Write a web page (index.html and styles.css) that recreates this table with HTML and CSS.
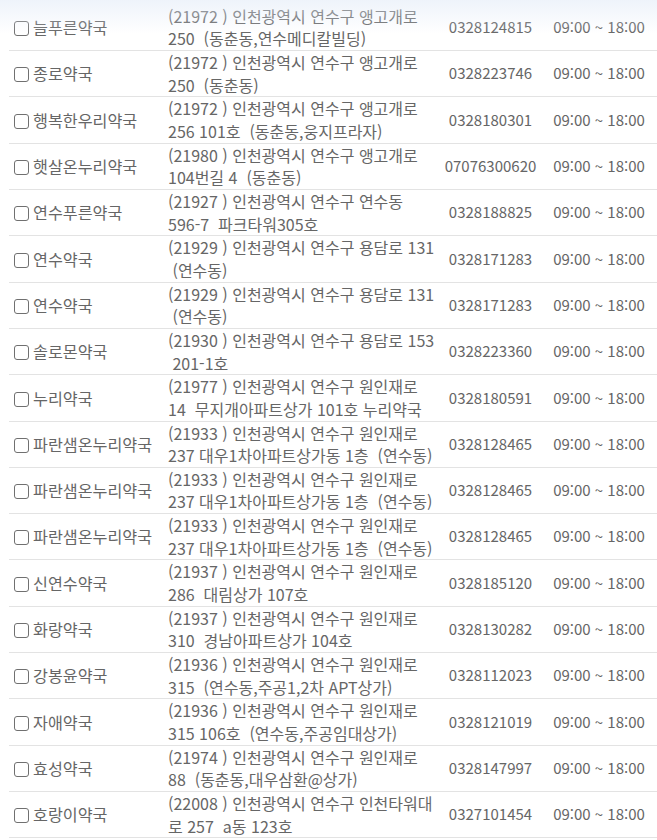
FILE: index.html
```html
<!DOCTYPE html>
<html lang="ko">
<head>
  <meta charset="UTF-8">
  <title>약국 목록</title>
  <link rel="stylesheet" href="styles.css">
</head>
<body>

  <div class="list-wrap">
    <table class="pharmacy-table">
      <colgroup>
        <col class="col-name">
        <col class="col-addr">
        <col class="col-tel">
        <col class="col-time">
      </colgroup>
      <tbody>
        <tr>
          <td class="name"><input type="checkbox" class="pick">늘푸른약국</td>
          <td class="addr">(21972 ) 인천광역시 연수구 앵고개로<br>250&nbsp; (동춘동,연수메디칼빌딩)</td>
          <td class="tel">0328124815</td>
          <td class="time">09:00 ~ 18:00</td>
        </tr>
        <tr>
          <td class="name"><input type="checkbox" class="pick">종로약국</td>
          <td class="addr">(21972 ) 인천광역시 연수구 앵고개로<br>250&nbsp; (동춘동)</td>
          <td class="tel">0328223746</td>
          <td class="time">09:00 ~ 18:00</td>
        </tr>
        <tr>
          <td class="name"><input type="checkbox" class="pick">행복한우리약국</td>
          <td class="addr">(21972 ) 인천광역시 연수구 앵고개로<br>256 101호&nbsp; (동춘동,웅지프라자)</td>
          <td class="tel">0328180301</td>
          <td class="time">09:00 ~ 18:00</td>
        </tr>
        <tr>
          <td class="name"><input type="checkbox" class="pick">햇살온누리약국</td>
          <td class="addr">(21980 ) 인천광역시 연수구 앵고개로<br>104번길 4&nbsp; (동춘동)</td>
          <td class="tel">07076300620</td>
          <td class="time">09:00 ~ 18:00</td>
        </tr>
        <tr>
          <td class="name"><input type="checkbox" class="pick">연수푸른약국</td>
          <td class="addr">(21927 ) 인천광역시 연수구 연수동<br>596-7&nbsp; 파크타워305호</td>
          <td class="tel">0328188825</td>
          <td class="time">09:00 ~ 18:00</td>
        </tr>
        <tr>
          <td class="name"><input type="checkbox" class="pick">연수약국</td>
          <td class="addr">(21929 ) 인천광역시 연수구 용담로 131<br>&nbsp;(연수동)</td>
          <td class="tel">0328171283</td>
          <td class="time">09:00 ~ 18:00</td>
        </tr>
        <tr>
          <td class="name"><input type="checkbox" class="pick">연수약국</td>
          <td class="addr">(21929 ) 인천광역시 연수구 용담로 131<br>&nbsp;(연수동)</td>
          <td class="tel">0328171283</td>
          <td class="time">09:00 ~ 18:00</td>
        </tr>
        <tr>
          <td class="name"><input type="checkbox" class="pick">솔로몬약국</td>
          <td class="addr">(21930 ) 인천광역시 연수구 용담로 153<br>&nbsp;201-1호</td>
          <td class="tel">0328223360</td>
          <td class="time">09:00 ~ 18:00</td>
        </tr>
        <tr>
          <td class="name"><input type="checkbox" class="pick">누리약국</td>
          <td class="addr">(21977 ) 인천광역시 연수구 원인재로<br>14&nbsp; 무지개아파트상가 101호 누리약국</td>
          <td class="tel">0328180591</td>
          <td class="time">09:00 ~ 18:00</td>
        </tr>
        <tr>
          <td class="name"><input type="checkbox" class="pick">파란샘온누리약국</td>
          <td class="addr">(21933 ) 인천광역시 연수구 원인재로<br>237 대우1차아파트상가동 1층&nbsp; (연수동)</td>
          <td class="tel">0328128465</td>
          <td class="time">09:00 ~ 18:00</td>
        </tr>
        <tr>
          <td class="name"><input type="checkbox" class="pick">파란샘온누리약국</td>
          <td class="addr">(21933 ) 인천광역시 연수구 원인재로<br>237 대우1차아파트상가동 1층&nbsp; (연수동)</td>
          <td class="tel">0328128465</td>
          <td class="time">09:00 ~ 18:00</td>
        </tr>
        <tr>
          <td class="name"><input type="checkbox" class="pick">파란샘온누리약국</td>
          <td class="addr">(21933 ) 인천광역시 연수구 원인재로<br>237 대우1차아파트상가동 1층&nbsp; (연수동)</td>
          <td class="tel">0328128465</td>
          <td class="time">09:00 ~ 18:00</td>
        </tr>
        <tr>
          <td class="name"><input type="checkbox" class="pick">신연수약국</td>
          <td class="addr">(21937 ) 인천광역시 연수구 원인재로<br>286&nbsp; 대림상가 107호</td>
          <td class="tel">0328185120</td>
          <td class="time">09:00 ~ 18:00</td>
        </tr>
        <tr>
          <td class="name"><input type="checkbox" class="pick">화랑약국</td>
          <td class="addr">(21937 ) 인천광역시 연수구 원인재로<br>310&nbsp; 경남아파트상가 104호</td>
          <td class="tel">0328130282</td>
          <td class="time">09:00 ~ 18:00</td>
        </tr>
        <tr>
          <td class="name"><input type="checkbox" class="pick">강봉윤약국</td>
          <td class="addr">(21936 ) 인천광역시 연수구 원인재로<br>315&nbsp; (연수동,주공1,2차 APT상가)</td>
          <td class="tel">0328112023</td>
          <td class="time">09:00 ~ 18:00</td>
        </tr>
        <tr>
          <td class="name"><input type="checkbox" class="pick">자애약국</td>
          <td class="addr">(21936 ) 인천광역시 연수구 원인재로<br>315 106호&nbsp; (연수동,주공임대상가)</td>
          <td class="tel">0328121019</td>
          <td class="time">09:00 ~ 18:00</td>
        </tr>
        <tr>
          <td class="name"><input type="checkbox" class="pick">효성약국</td>
          <td class="addr">(21974 ) 인천광역시 연수구 원인재로<br>88&nbsp; (동춘동,대우삼환@상가)</td>
          <td class="tel">0328147997</td>
          <td class="time">09:00 ~ 18:00</td>
        </tr>
        <tr>
          <td class="name"><input type="checkbox" class="pick">호랑이약국</td>
          <td class="addr">(22008 ) 인천광역시 연수구 인천타워대<br>로 257&nbsp; a동 123호</td>
          <td class="tel">0327101454</td>
          <td class="time">09:00 ~ 18:00</td>
        </tr>
      </tbody>
    </table>
    <div class="top-fade"></div>
  </div>

</body>
</html>
```

FILE: styles.css
```css
* {
  margin: 0; padding: 0; box-sizing: border-box;
}

html, body {
  overflow: hidden;
}

body {
  font-family: "Noto Sans CJK KR", "Noto Sans", sans-serif;
  font-size: 15px;
  color: #666;
  background: #fff;
}

.list-wrap {
  position: relative;
  padding: 4.7px 0 0 9px;
}

.top-fade {
  position: absolute;
  top: 0; left: 0; right: 0;
  height: 34px;
  background: linear-gradient(to bottom, rgba(225, 234, 247, 0.55), rgba(255, 255, 255, 0));
  pointer-events: none;
}

.pharmacy-table {
  width: 648px;
  border-collapse: collapse;
  table-layout: fixed;
}

.col-name { width: 154px; }
.col-addr { width: 277px; }
.col-tel  { width: 101px; }
.col-time { width: 116px; }

.pharmacy-table td {
  line-height: 22.65px;
  vertical-align: middle;
  border-bottom: 1px solid #e3e3e3;
  white-space: nowrap;
}

.pharmacy-table td.name {
  padding-left: 5px;
  font-size: 16.2px;
}

.pharmacy-table td.addr {
  padding-left: 5px;
  font-size: 16px;
}

.pharmacy-table td.tel,
.pharmacy-table td.time {
  text-align: center;
}

.pick {
  appearance: none;
  -webkit-appearance: none;
  display: inline-block;
  width: 15px;
  height: 15px;
  border: 1.5px solid #707070;
  border-radius: 3px;
  background: #fff;
  margin-right: 4px;
  vertical-align: -2px;
}
```
